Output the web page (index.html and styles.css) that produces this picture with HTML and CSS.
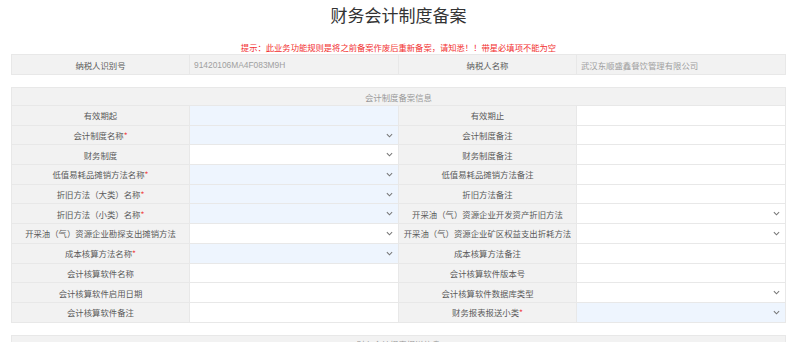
FILE: index.html
```html
<!DOCTYPE html>
<html lang="zh-CN">
<head>
    <meta charset="UTF-8">
    <title>财务会计制度备案</title>
    <link rel="stylesheet" href="styles.css">
</head>
<body>
    <div class="page">
        <h1 class="title">财务会计制度备案</h1>
        <p class="hint">提示：此业务功能规则是将之前备案作废后重新备案，请知悉！！带星必填项不能为空</p>

        <table class="grid head-grid">
            <colgroup><col class="c-label"><col class="c-value"><col class="c-label"><col class="c-value"></colgroup>
            <tr>
                <td class="label">纳税人识别号</td>
                <td class="value readonly">91420106MA4F083M9H</td>
                <td class="label">纳税人名称</td>
                <td class="value readonly">武汉东顺盛鑫餐饮管理有限公司</td>
            </tr>
        </table>

        <table class="grid section">
            <colgroup><col class="c-label"><col class="c-value"><col class="c-label"><col class="c-value"></colgroup>
            <tr class="cap-row"><td class="caption" colspan="4">会计制度备案信息</td></tr>
            <tr>
                <td class="label">有效期起</td>
                <td class="value req"></td>
                <td class="label">有效期止</td>
                <td class="value"></td>
            </tr>
            <tr>
                <td class="label">会计制度名称<span class="star">*</span></td>
                <td class="value req"><div class="select"><svg class="chev" viewBox="0 0 8 5"><path d="M1 1l3 3 3-3"/></svg></div></td>
                <td class="label">会计制度备注</td>
                <td class="value"></td>
            </tr>
            <tr>
                <td class="label">财务制度</td>
                <td class="value"><div class="select"><svg class="chev" viewBox="0 0 8 5"><path d="M1 1l3 3 3-3"/></svg></div></td>
                <td class="label">财务制度备注</td>
                <td class="value"></td>
            </tr>
            <tr>
                <td class="label">低值易耗品摊销方法名称<span class="star">*</span></td>
                <td class="value req"><div class="select"><svg class="chev" viewBox="0 0 8 5"><path d="M1 1l3 3 3-3"/></svg></div></td>
                <td class="label">低值易耗品摊销方法备注</td>
                <td class="value"></td>
            </tr>
            <tr>
                <td class="label">折旧方法（大类）名称<span class="star">*</span></td>
                <td class="value req"><div class="select"><svg class="chev" viewBox="0 0 8 5"><path d="M1 1l3 3 3-3"/></svg></div></td>
                <td class="label">折旧方法备注</td>
                <td class="value"></td>
            </tr>
            <tr>
                <td class="label">折旧方法（小类）名称<span class="star">*</span></td>
                <td class="value req"><div class="select"><svg class="chev" viewBox="0 0 8 5"><path d="M1 1l3 3 3-3"/></svg></div></td>
                <td class="label">开采油（气）资源企业开发资产折旧方法</td>
                <td class="value"><div class="select"><svg class="chev" viewBox="0 0 8 5"><path d="M1 1l3 3 3-3"/></svg></div></td>
            </tr>
            <tr>
                <td class="label">开采油（气）资源企业勘探支出摊销方法</td>
                <td class="value"><div class="select"><svg class="chev" viewBox="0 0 8 5"><path d="M1 1l3 3 3-3"/></svg></div></td>
                <td class="label">开采油（气）资源企业矿区权益支出折耗方法</td>
                <td class="value"><div class="select"><svg class="chev" viewBox="0 0 8 5"><path d="M1 1l3 3 3-3"/></svg></div></td>
            </tr>
            <tr>
                <td class="label">成本核算方法名称<span class="star">*</span></td>
                <td class="value req"><div class="select"><svg class="chev" viewBox="0 0 8 5"><path d="M1 1l3 3 3-3"/></svg></div></td>
                <td class="label">成本核算方法备注</td>
                <td class="value"></td>
            </tr>
            <tr>
                <td class="label">会计核算软件名称</td>
                <td class="value"></td>
                <td class="label">会计核算软件版本号</td>
                <td class="value"></td>
            </tr>
            <tr>
                <td class="label">会计核算软件启用日期</td>
                <td class="value"></td>
                <td class="label">会计核算软件数据库类型</td>
                <td class="value"><div class="select"><svg class="chev" viewBox="0 0 8 5"><path d="M1 1l3 3 3-3"/></svg></div></td>
            </tr>
            <tr>
                <td class="label">会计核算软件备注</td>
                <td class="value"></td>
                <td class="label">财务报表报送小类<span class="star">*</span></td>
                <td class="value req"><div class="select"><svg class="chev" viewBox="0 0 8 5"><path d="M1 1l3 3 3-3"/></svg></div></td>
            </tr>
        </table>

        <table class="grid section">
            <tr class="cap-row"><td class="caption" colspan="4">财务会计报表报送信息</td></tr>
        </table>
    </div>
</body>
</html>
```

FILE: styles.css
```css
body {
    margin: 0;
    font-family: "Noto Sans CJK SC", "Liberation Sans", sans-serif;
    background: #fff;
    color: #555;
}
.page {
    width: 775px;
    margin-left: 11px;
}
.title {
    margin: 0;
    height: 30px;
    line-height: 30px;
    font-size: 17px;
    font-weight: 400;
    color: #333;
    text-align: center;
}
.hint {
    margin: 10px 0 0;
    height: 14px;
    line-height: 14px;
    font-size: 8.3px;
    color: #f23030;
    text-align: center;
}
.grid {
    width: 100%;
    border-collapse: collapse;
    table-layout: fixed;
    font-size: 8.4px;
}
.c-label {
    width: 23%;
}
.c-value {
    width: 27%;
}
.grid td {
    padding: 0;
    border: 1px solid #e8e8e8;
}
.head-grid tr {
    height: 20px;
}
.section {
    margin-top: 12px;
}
.section tr {
    height: 19.7px;
}
.section tr.cap-row {
    height: 18px;
}
.label {
    background: #f2f2f2;
    text-align: center;
    color: #5a5a5a;
}
.value {
    background: #fff;
    padding: 0 4px !important;
}
.value.readonly {
    background: #f2f2f2;
    color: #a0a0a0;
    font-family: "Liberation Sans", "Noto Sans CJK SC", sans-serif;
}
.value.req {
    background: #eef5fe;
}
.caption {
    background: #f2f2f2;
    text-align: center;
    color: #999;
}
.star {
    color: #f04848;
}
.select {
    display: flex;
    justify-content: flex-end;
    align-items: center;
}
.chev {
    width: 7px;
    height: 5px;
    margin-right: 1px;
    fill: none;
    stroke: #777;
    stroke-width: 1.2;
}
```
